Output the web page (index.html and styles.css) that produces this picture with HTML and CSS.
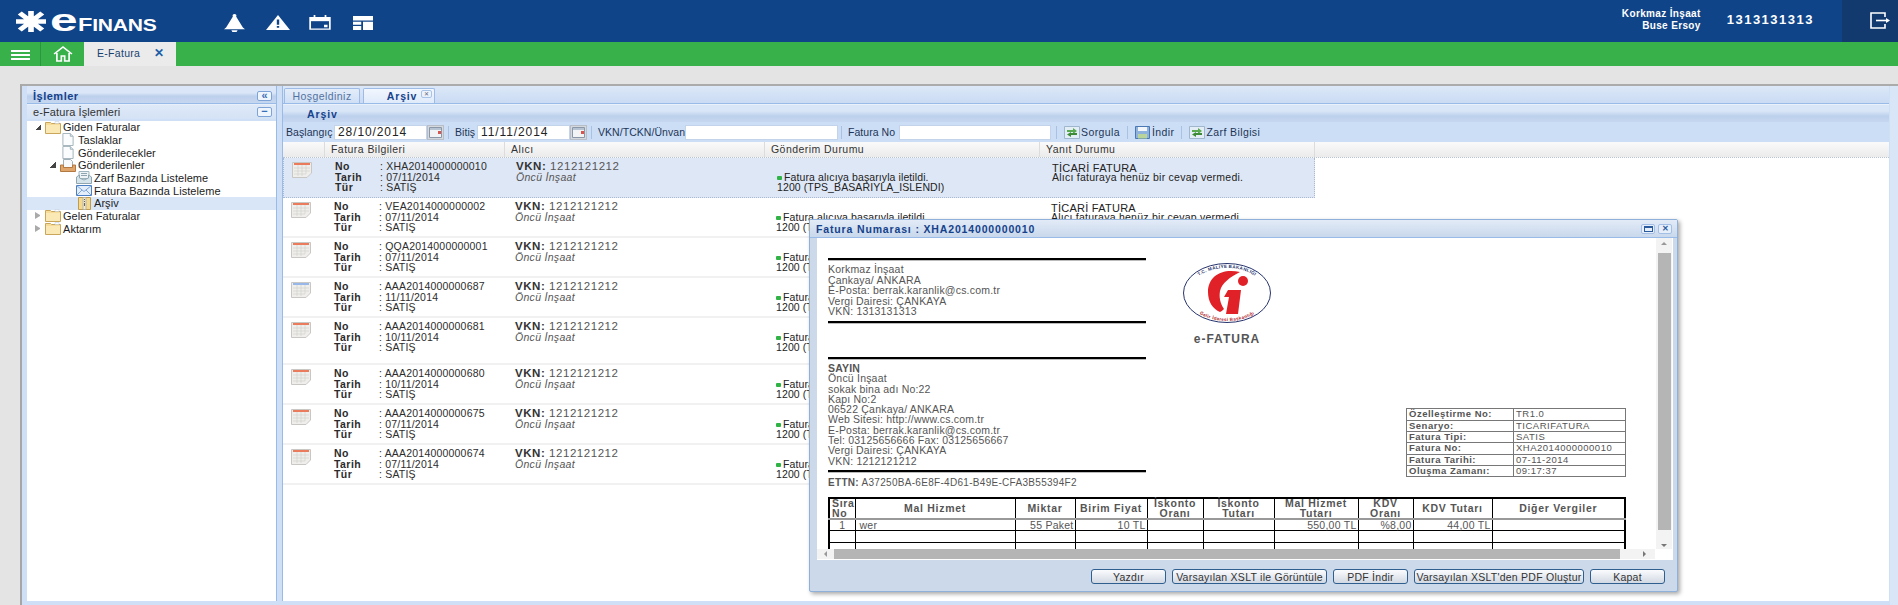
FILE: index.html
```html
<!DOCTYPE html>
<html lang="tr">
<head>
<meta charset="utf-8">
<title>eFinans E-Fatura</title>
<link rel="stylesheet" href="styles.css">
</head>
<body>
<svg class="defs" width="0" height="0" aria-hidden="true">
  <symbol id="i-folder" viewBox="0 0 16 13"><path d="M.5 3V1.500h5l1 1h9V12.500H.5z" fill="#f6dc96" stroke="#c9a65a"/><path d="M1 4h14v8H1z" fill="#fbe9b5"/><path d="M10 .5h4v2h-4z" fill="#fff" stroke="#b9c8d8" stroke-width=".5"/></symbol>
  <symbol id="i-doc" viewBox="0 0 12 14"><path d="M.5.500h8l3 3v10H.5z" fill="#fbfcfd" stroke="#9fb0b8"/><path d="M8.500.5v3h3" fill="#dfe8ee" stroke="#9fb0b8"/></symbol>
  <symbol id="i-tray" viewBox="0 0 16 13"><path d="M3.500.5h7l2 2v6h-9z" fill="#f7f9fb" stroke="#9fb0b8"/><path d="M.5 6h3v2.500h9V6h3v6.500H.5z" fill="#e0a56a" stroke="#b27a42"/></symbol>
  <symbol id="i-env-open" viewBox="0 0 16 13"><path d="M3 .5h10v7H3z" fill="#eef4f6" stroke="#9fb5bd"/><path d="M5 2.500h6M5 4.500h6" stroke="#8fa6b0"/><path d="M.5 6l3-2v3l4.500 2 4.500-2V4l3 2v6.500H.5z" fill="#d5e4ea" stroke="#8fa6b0"/></symbol>
  <symbol id="i-env" viewBox="0 0 16 13"><path d="M.5 1.500h15v10H.5z" fill="#e4eefb" stroke="#4a7fc4"/><path d="M.5 1.500L8 7.500l7.500-6M.5 11.500L6 6M15.500 11.500L10 6" fill="none" stroke="#7fa6d8"/></symbol>
  <symbol id="i-zip" viewBox="0 0 13 13"><path d="M.5.500h12v12H.5z" fill="#f5d98e" stroke="#c09c50"/><path d="M5 .5h3v12H5z" fill="#f4ecd2" stroke="#b5b5a5"/><path d="M6 2h1v1H6zM6 4h1v1H6zM6 6h1v3H6z" fill="#666"/></symbol>
  <symbol id="i-sheet" viewBox="0 0 20 16"><path d="M.5.500h19V11l-4.500 4.500H.5z" fill="#efeeec" stroke="#c9c7c3"/><path d="M2 2h16" stroke="#e8552c" stroke-width="1.500"/><path d="M6 3v11M10 3v11M14 3v9M2 6h16M2 9h16M2 12h12" stroke="#d3d1cc" stroke-width=".7"/></symbol>
  <symbol id="i-sheet-blue" viewBox="0 0 20 16"><path d="M.5.500h19V11l-4.500 4.500H.5z" fill="#efeeec" stroke="#c9c7c3"/><path d="M2 2h16" stroke="#7ba6e8" stroke-width="1.500"/><path d="M6 3v11M10 3v11M14 3v9M2 6h16M2 9h16M2 12h12" stroke="#d3d1cc" stroke-width=".7"/></symbol>
  <symbol id="i-cal" viewBox="0 0 13 11"><path d="M.5.500h12v10H.5z" fill="#f2f3f5" stroke="#8a97a8"/><path d="M1 1h11v2H1z" fill="#b5c3d3"/><path d="M9 4h3v3H9z" fill="#d9534f"/></symbol>
  <symbol id="i-refresh" viewBox="0 0 16 13"><path d="M.5.500h15v12H.5z" fill="#e3edf6" stroke="#9fb6cc"/><path d="M3 4h6V2l4 3-4 3V6H3z" fill="#58a94f"/><path d="M13 9H7v2L3 8.500 7 6v1h6z" fill="#3d8b37"/></symbol>
  <symbol id="i-save" viewBox="0 0 15 13"><path d="M.5.500h14v12H.5z" fill="#8fb2dc" stroke="#4a78b5"/><path d="M3 1h9v4H3z" fill="#f2f6fb"/><path d="M3 8h9v4.500H3z" fill="#b8d49a"/></symbol>
</svg>

<header class="topbar">
  <div class="logo">
    <svg class="logo-star" viewBox="0 0 24 22" preserveAspectRatio="none" aria-hidden="true"><path d="M12 0v22M0 11h24M3 2l18 18M21 2L3 20" stroke="#fff" stroke-width="4.500"/></svg>
    <span class="logo-e">e</span><span class="logo-word"><span class="logo-f">F</span>INANS</span>
  </div>
  <nav class="top-icons">
    <svg class="ti ti-bell" viewBox="0 0 20 20" preserveAspectRatio="none"><path d="M10 0a1.800 1.800 0 0 1 1.500 2.800L18 15l2 2H0l2-2L8.500 2.800A1.800 1.800 0 0 1 10 0z" fill="#fff"/><path d="M7 18h6l-1 2H8z" fill="#fff"/></svg>
    <svg class="ti ti-alert" viewBox="0 0 20 17" preserveAspectRatio="none"><path d="M10 0l10 17H0z" fill="#fff"/><path d="M9 5h2v6H9zM9 12.500h2v2H9z" fill="#0f4488"/></svg>
    <svg class="ti ti-cal" viewBox="0 0 19 17" preserveAspectRatio="none"><path d="M1 3h17v13H1z" fill="none" stroke="#fff" stroke-width="1.500"/><path d="M1 3h17v4H1z" fill="#fff"/><path d="M4 0h1.500v3H4zM13.500 0H15v3h-1.500zM13 11h3v3h-3z" fill="#fff"/></svg>
    <svg class="ti ti-lay" viewBox="0 0 17 16" preserveAspectRatio="none"><path d="M0 0h17v5H0zM0 6.500h7V10H0zM0 11.500h7V16H0zM8.500 6.500H17V16H8.500z" fill="#fff"/></svg>
  </nav>
  <div class="user">
    <div class="user-name">Korkmaz İnşaat<br>Buse Ersoy</div>
    <div class="user-vkn">1313131313</div>
  </div>
  <div class="logout">
    <svg viewBox="0 0 20 17" aria-hidden="true"><path d="M15 5V1H1v15h14v-4" fill="none" stroke="#fff" stroke-width="1.600"/><path d="M6 8.500h11" stroke="#fff" stroke-width="1.600"/><path d="M16 6l4 2.500-4 2.500z" fill="#fff"/></svg>
  </div>
</header>

<div class="greenbar">
  <div class="burger"><i></i><i></i><i></i></div>
  <div class="home">
    <svg viewBox="0 0 18 16" preserveAspectRatio="none" aria-hidden="true"><path d="M1 8l8-7 8 7M3.500 7v8h4v-5h3v5h4V7" fill="none" stroke="#fff" stroke-width="1.500"/></svg>
  </div>
  <div class="app-tab"><span>E-Fatura</span><b>✕</b></div>
</div>

<main class="workspace">
  <div class="frame">
    <aside class="left">
      <div class="panel-title"><span>İşlemler</span><span class="mini">«</span></div>
      <div class="panel-sub"><span>e-Fatura İşlemleri</span><span class="mini">−</span></div>
      <ul class="tree">
        <li class="node lv0"><i class="tw open"></i><svg class="ic16"><use href="#i-folder"/></svg><span>Giden Faturalar</span></li>
        <li class="node lv1"><svg class="ic12"><use href="#i-doc"/></svg><span>Taslaklar</span></li>
        <li class="node lv1"><svg class="ic12"><use href="#i-doc"/></svg><span>Gönderilecekler</span></li>
        <li class="node lv1b"><i class="tw open"></i><svg class="ic16"><use href="#i-tray"/></svg><span>Gönderilenler</span></li>
        <li class="node lv2"><svg class="ic16"><use href="#i-env-open"/></svg><span>Zarf Bazında Listeleme</span></li>
        <li class="node lv2"><svg class="ic16"><use href="#i-env"/></svg><span>Fatura Bazında Listeleme</span></li>
        <li class="node lv2 sel"><svg class="ic13"><use href="#i-zip"/></svg><span>Arşiv</span></li>
        <li class="node lv0"><i class="tw closed"></i><svg class="ic16"><use href="#i-folder"/></svg><span>Gelen Faturalar</span></li>
        <li class="node lv0"><i class="tw closed"></i><svg class="ic16"><use href="#i-folder"/></svg><span>Aktarım</span></li>
      </ul>
    </aside>

    <section class="right">
      <div class="tabs">
        <div class="tab">Hoşgeldiniz</div>
        <div class="tab active"><b>Arşiv</b><span class="tab-x">✕</span></div>
      </div>
      <div class="subtitle">Arşiv</div>
      <div class="toolbar">
        <label class="t-l1">Başlangıç</label>
        <span class="field f-date">28/10/2014</span><span class="cal"><svg><use href="#i-cal"/></svg></span>
        <i class="sep s1"></i>
        <label class="t-l2">Bitiş</label>
        <span class="field f-date">11/11/2014</span><span class="cal"><svg><use href="#i-cal"/></svg></span>
        <i class="sep s1"></i>
        <label class="t-l3">VKN/TCKN/Ünvan</label>
        <span class="field f-vkn"></span>
        <i class="sep s2"></i>
        <label class="t-l4">Fatura No</label>
        <span class="field f-no"></span>
        <i class="sep s3"></i>
        <span class="tbtn"><svg class="ic16"><use href="#i-refresh"/></svg>Sorgula</span>
        <i class="sep s4"></i>
        <span class="tbtn"><svg class="ic15"><use href="#i-save"/></svg>İndir</span>
        <i class="sep s4"></i>
        <span class="tbtn"><svg class="ic16"><use href="#i-refresh"/></svg>Zarf Bilgisi</span>
      </div>
      <div class="grid">
        <div class="ghead">
          <div class="gh"></div><div class="gh">Fatura Bilgileri</div><div class="gh">Alıcı</div><div class="gh">Gönderim Durumu</div><div class="gh">Yanıt Durumu</div><div class="gh gh-last"></div>
        </div>

        <div class="row selected">
          <div class="c-ic"><svg><use href="#i-sheet"/></svg></div>
          <div class="c-info"><b>No</b><span>: XHA2014000000010</span><b>Tarih</b><span>: 07/11/2014</span><b>Tür</b><span>: SATIŞ</span></div>
          <div class="c-buyer"><div class="vkn"><b>VKN:</b> 1212121212</div><em>Öncü İnşaat</em></div>
          <div class="c-send"><div><i class="dot"></i>Fatura alıcıya başarıyla iletildi.</div><div>1200 (TPS_BASARIYLA_ISLENDI)</div></div>
          <div class="c-reply"><div>TİCARİ FATURA</div><div>Alıcı faturaya henüz bir cevap vermedi.</div></div>
        </div>
        <div class="row">
          <div class="c-ic"><svg><use href="#i-sheet"/></svg></div>
          <div class="c-info"><b>No</b><span>: VEA2014000000002</span><b>Tarih</b><span>: 07/11/2014</span><b>Tür</b><span>: SATIŞ</span></div>
          <div class="c-buyer"><div class="vkn"><b>VKN:</b> 1212121212</div><em>Öncü İnşaat</em></div>
          <div class="c-send"><div><i class="dot"></i>Fatura alıcıya başarıyla iletildi.</div><div>1200 (TPS_BASARIYLA_ISLENDI)</div></div>
          <div class="c-reply"><div>TİCARİ FATURA</div><div>Alıcı faturaya henüz bir cevap vermedi.</div></div>
        </div>
        <div class="row">
          <div class="c-ic"><svg><use href="#i-sheet"/></svg></div>
          <div class="c-info"><b>No</b><span>: QQA2014000000001</span><b>Tarih</b><span>: 07/11/2014</span><b>Tür</b><span>: SATIŞ</span></div>
          <div class="c-buyer"><div class="vkn"><b>VKN:</b> 1212121212</div><em>Öncü İnşaat</em></div>
          <div class="c-send"><div><i class="dot"></i>Fatura alıcıya başarıyla iletildi.</div><div>1200 (TPS_BASARIYLA_ISLENDI)</div></div>
          <div class="c-reply"><div>TİCARİ FATURA</div><div>Alıcı faturaya henüz bir cevap vermedi.</div></div>
        </div>
        <div class="row">
          <div class="c-ic"><svg><use href="#i-sheet-blue"/></svg></div>
          <div class="c-info"><b>No</b><span>: AAA2014000000687</span><b>Tarih</b><span>: 11/11/2014</span><b>Tür</b><span>: SATIŞ</span></div>
          <div class="c-buyer"><div class="vkn"><b>VKN:</b> 1212121212</div><em>Öncü İnşaat</em></div>
          <div class="c-send"><div><i class="dot"></i>Fatura alıcıya başarıyla iletildi.</div><div>1200 (TPS_BASARIYLA_ISLENDI)</div></div>
          <div class="c-reply"><div>TİCARİ FATURA</div><div>Alıcı faturaya henüz bir cevap vermedi.</div></div>
        </div>
        <div class="row tall">
          <div class="c-ic"><svg><use href="#i-sheet"/></svg></div>
          <div class="c-info"><b>No</b><span>: AAA2014000000681</span><b>Tarih</b><span>: 10/11/2014</span><b>Tür</b><span>: SATIŞ</span></div>
          <div class="c-buyer"><div class="vkn"><b>VKN:</b> 1212121212</div><em>Öncü İnşaat</em></div>
          <div class="c-send"><div><i class="dot"></i>Fatura alıcıya başarıyla iletildi.</div><div>1200 (TPS_BASARIYLA_ISLENDI)</div></div>
          <div class="c-reply"><div>TİCARİ FATURA</div><div>Alıcı faturaya henüz bir cevap vermedi.</div></div>
        </div>
        <div class="row">
          <div class="c-ic"><svg><use href="#i-sheet"/></svg></div>
          <div class="c-info"><b>No</b><span>: AAA2014000000680</span><b>Tarih</b><span>: 10/11/2014</span><b>Tür</b><span>: SATIŞ</span></div>
          <div class="c-buyer"><div class="vkn"><b>VKN:</b> 1212121212</div><em>Öncü İnşaat</em></div>
          <div class="c-send"><div><i class="dot"></i>Fatura alıcıya başarıyla iletildi.</div><div>1200 (TPS_BASARIYLA_ISLENDI)</div></div>
          <div class="c-reply"><div>TİCARİ FATURA</div><div>Alıcı faturaya henüz bir cevap vermedi.</div></div>
        </div>
        <div class="row">
          <div class="c-ic"><svg><use href="#i-sheet"/></svg></div>
          <div class="c-info"><b>No</b><span>: AAA2014000000675</span><b>Tarih</b><span>: 07/11/2014</span><b>Tür</b><span>: SATIŞ</span></div>
          <div class="c-buyer"><div class="vkn"><b>VKN:</b> 1212121212</div><em>Öncü İnşaat</em></div>
          <div class="c-send"><div><i class="dot"></i>Fatura alıcıya başarıyla iletildi.</div><div>1200 (TPS_BASARIYLA_ISLENDI)</div></div>
          <div class="c-reply"><div>TİCARİ FATURA</div><div>Alıcı faturaya henüz bir cevap vermedi.</div></div>
        </div>
        <div class="row">
          <div class="c-ic"><svg><use href="#i-sheet"/></svg></div>
          <div class="c-info"><b>No</b><span>: AAA2014000000674</span><b>Tarih</b><span>: 07/11/2014</span><b>Tür</b><span>: SATIŞ</span></div>
          <div class="c-buyer"><div class="vkn"><b>VKN:</b> 1212121212</div><em>Öncü İnşaat</em></div>
          <div class="c-send"><div><i class="dot"></i>Fatura alıcıya başarıyla iletildi.</div><div>1200 (TPS_BASARIYLA_ISLENDI)</div></div>
          <div class="c-reply"><div>TİCARİ FATURA</div><div>Alıcı faturaya henüz bir cevap vermedi.</div></div>
        </div>
      </div>
    </section>
  </div>
  <div class="frame-end"></div>
</main>

<div class="dialog">
  <div class="dlg-title">
    <span>Fatura Numarası : XHA2014000000010</span>
    <span class="dlg-btn"><i class="max"></i></span><span class="dlg-btn">✕</span>
  </div>
  <div class="dlg-body">
    <div class="dlg-view">
      <div class="invoice">
        <div class="inv-top">
          <div class="inv-left">
            <hr class="rule">
            <div class="party first">Korkmaz İnşaat<br>Çankaya/ ANKARA<br>E-Posta: berrak.karanlik@cs.com.tr<br>Vergi Dairesi: ÇANKAYA<br>VKN: 1313131313</div>
            <hr class="rule">
            <hr class="rule gap">
            <div class="party second"><b>SAYIN</b><br>Öncü İnşaat<br>sokak bina adı No:22<br>Kapı No:2<br>06522 Çankaya/ ANKARA<br>Web Sitesi: http://www.cs.com.tr<br>E-Posta: berrak.karanlik@cs.com.tr<br>Tel: 03125656666 Fax: 03125656667<br>Vergi Dairesi: ÇANKAYA<br>VKN: 1212121212</div>
            <hr class="rule">
            <div class="ettn"><b>ETTN:</b> A37250BA-6E8F-4D61-B49E-CFA3B55394F2</div>
          </div>
          <div class="inv-right">
            <div class="gib">
              <svg viewBox="0 0 90 62" aria-hidden="true">
                <ellipse cx="45" cy="31" rx="43.500" ry="29.500" fill="#fff" stroke="#27346e" stroke-width="1"/>
                <defs>
                  <path id="arc-top" d="M7 30A38 24 0 0 1 83 30"/>
                  <path id="arc-bot" d="M5 33A40 26 0 0 0 85 33"/>
                </defs>
                <text class="gib-t"><textPath href="#arc-top" startOffset="50%" text-anchor="middle">T.C. MALİYE BAKANLIĞI</textPath></text>
                <text class="gib-b"><textPath href="#arc-bot" startOffset="50%" text-anchor="middle">Gelir İdaresi Başkanlığı</textPath></text>
                <path d="M58 10C40 6 26 14 26 30c0 10 5 17 12 20 2-1 3-2 4-3-4-6-5-12-4-18 2-8 10-14 20-19z" fill="#e02127"/>
                <path d="M46 28h13l-3 24H44l3-17h-5z" fill="#e02127"/>
                <circle cx="61" cy="19" r="5" fill="#e02127"/>
              </svg>
              <div class="gib-name">e-FATURA</div>
            </div>
            <table class="summary">
              <tr><th>Özelleştirme No:</th><td>TR1.0</td></tr>
              <tr><th>Senaryo:</th><td>TICARIFATURA</td></tr>
              <tr><th>Fatura Tipi:</th><td>SATIS</td></tr>
              <tr><th>Fatura No:</th><td>XHA2014000000010</td></tr>
              <tr><th>Fatura Tarihi:</th><td>07-11-2014</td></tr>
              <tr><th>Oluşma Zamanı:</th><td>09:17:37</td></tr>
            </table>
          </div>
        </div>
        <table class="lines">
          <colgroup><col><col><col><col><col><col><col><col><col><col></colgroup>
          <tr><th class="tl">Sıra No</th><th>Mal Hizmet</th><th>Miktar</th><th>Birim Fiyat</th><th>İskonto Oranı</th><th>İskonto Tutarı</th><th>Mal Hizmet Tutarı</th><th>KDV Oranı</th><th>KDV Tutarı</th><th>Diğer Vergiler</th></tr>
          <tr><td class="tc">1</td><td class="tp">wer</td><td class="tr">55 Paket</td><td class="tr">10 TL</td><td></td><td></td><td class="tr">550,00 TL</td><td class="tr">%8,00</td><td class="tr">44,00 TL</td><td></td></tr>
          <tr><td></td><td></td><td></td><td></td><td></td><td></td><td></td><td></td><td></td><td></td></tr>
          <tr><td></td><td></td><td></td><td></td><td></td><td></td><td></td><td></td><td></td><td></td></tr>
        </table>
      </div>
      <div class="vbar"><i class="arr-up"></i><i class="v-thumb"></i><i class="arr-down"></i></div>
      <div class="hbar"><i class="arr-left"></i><i class="h-thumb"></i><i class="arr-right"></i></div>
    </div>
  </div>
  <div class="dlg-foot">
    <button class="btn b-s">Yazdır</button>
    <button class="btn b-m">Varsayılan XSLT ile Görüntüle</button>
    <button class="btn b-s">PDF İndir</button>
    <button class="btn b-l">Varsayılan XSLT'den PDF Oluştur</button>
    <button class="btn b-s">Kapat</button>
  </div>
</div>
</body>
</html>
```

FILE: styles.css
```css
* { box-sizing: border-box; }
html, body { margin: 0; padding: 0; height: 605px; overflow: hidden; }
body { font-family: "Liberation Sans", Arial, sans-serif; font-size: 11px; color: #222; background: #e4e4e4; position: relative; letter-spacing: .45px; }
.defs { position: absolute; }
ul { list-style: none; margin: 0; padding: 0; }

/* top bar */
.topbar { height: 42px; background: #0f4488; display: flex; align-items: stretch; color: #fff; }
.logo { width: 224px; flex: none; padding-left: 16px; display: flex; align-items: baseline; font-weight: bold; white-space: nowrap; letter-spacing: 0; }
.logo-star { width: 30px; height: 21px; align-self: flex-start; margin: 11px 4px 0 0; flex: none; }
.logo-e { display: block; width: 28px; font-size: 31px; line-height: 41px; transform: scaleX(1.6); transform-origin: left center; flex: none; }
.logo-word { display: block; font-size: 17px; transform: scaleX(1.24); transform-origin: left center; flex: none; letter-spacing: -.2px; }
.logo-f { font-size: 19px; }
.top-icons { display: flex; align-items: center; width: 1000px; flex: none; padding-top: 3px; }
.ti { display: block; flex: none; }
.ti-bell { width: 21px; height: 18px; }
.ti-alert { width: 24px; height: 15px; margin-left: 21px; }
.ti-cal { width: 22px; height: 15px; margin-left: 19px; }
.ti-lay { width: 20px; height: 14px; margin-left: 22px; }
.user { flex: 1; display: flex; align-items: center; justify-content: flex-end; padding-right: 28px; padding-bottom: 3px; }
.user-name { text-align: right; font-weight: bold; font-size: 10px; line-height: 11.500px; margin-right: 26px; letter-spacing: .35px; }
.user-vkn { font-weight: bold; font-size: 13px; letter-spacing: 1.500px; }
.logout { width: 56px; flex: none; background: #123a6f; display: flex; align-items: center; justify-content: flex-end; padding-right: 8px; padding-bottom: 2px; }
.logout svg { width: 20px; height: 17px; }

/* green bar */
.greenbar { height: 24px; background: #39b14b; display: flex; align-items: stretch; }
.burger { width: 41px; padding: 8px 10px 0 11px; border-right: 1px solid #2b963c; }
.burger i { display: block; height: 2px; background: #fff; margin-bottom: 2px; }
.home { width: 43px; display: flex; align-items: center; justify-content: center; padding-bottom: 1px; }
.home svg { width: 20px; height: 16px; }
.app-tab { width: 92px; background: #ebebeb; color: #17426f; display: flex; align-items: center; justify-content: space-between; padding: 0 12px 3px 13px; font-size: 10.500px; white-space: nowrap; letter-spacing: .3px; }
.app-tab b { font-size: 12px; color: #1a5ea8; }

/* workspace */
.workspace { height: 539px; display: flex; padding: 18px 0 0 20px; }
.frame { flex: none; width: 1870px; height: 521px; display: flex; border-top: 2px solid #ababab; border-left: 2px solid #a6a6a6; background: #cfe0f6; padding-left: 5px; }
.frame-end { flex: 1; height: 521px; background: #d9e6f7; border-top: 2px solid #ababab; }

/* left panel */
.left { width: 250px; height: 515px; background: #fff; flex: none; border-right: 1px solid #99bbe8; }
.panel-title { height: 18px; display: flex; align-items: center; justify-content: space-between; padding: 2px 4px 0 6px; font-weight: bold; color: #15428b; background: linear-gradient(#dbe7f8 0 40%, #bccfec 60%, #c6d7f0); border-bottom: 1px solid #99bbe8; font-size: 11px; letter-spacing: .5px; }
.panel-sub { height: 17px; display: flex; align-items: center; justify-content: space-between; padding: 0 4px 0 6px; color: #333; background: linear-gradient(#dfe9f8, #d4e2f5); border-top: 1px solid #e8f0fb; border-bottom: 2px solid #cfe0f6; letter-spacing: .1px; }
.mini { width: 15px; height: 10px; border: 1px solid #7ea3d6; border-radius: 2px; background: #eff5fd; color: #3a6fb7; font-size: 11px; line-height: 6px; text-align: center; letter-spacing: 0; font-weight: bold; }
.tree { color: #1c1c1c; letter-spacing: .05px; }
.node { height: 12.670px; display: flex; align-items: center; white-space: nowrap; position: relative; }
.node svg { flex: none; overflow: visible; }
.lv0 { padding-left: 8px; }
.lv1 { padding-left: 35px; }
.lv1b { padding-left: 23px; }
.lv2 { padding-left: 49px; }
.sel { background: #d9e6f7; }
.tw { display: block; width: 6px; height: 6px; margin-right: 4px; flex: none; }
.tw.open { background: linear-gradient(135deg, transparent 50%, #444 50%); }
.tw.closed { border-left: 5px solid #aaa; border-top: 3px solid transparent; border-bottom: 3px solid transparent; height: 7px; width: 5px; margin-right: 5px; }
.ic16 { width: 16px; height: 13px; margin-right: 2px; }
.ic15 { width: 15px; height: 13px; margin-right: 2px; }
.ic12 { width: 12px; height: 13px; margin-right: 4px; }
.ic13 { width: 13px; height: 13px; margin: 0 3px 0 2px; }

/* right panel */
.right { flex: none; width: 1607px; margin-left: 5px; height: 515px; background: #fff; border-left: 1px solid #99bbe8; display: flex; flex-direction: column; }
.tabs { height: 18px; display: flex; align-items: flex-end; gap: 3px; padding-left: 1px; background: linear-gradient(#dce8f8, #cadbf3); border-bottom: 1px solid #99bbe8; flex: none; }
.tab { width: 76px; height: 15px; text-align: center; line-height: 14px; color: #53729f; background: linear-gradient(#e4edf9, #cfdff5); border: 1px solid #9dbbe5; border-bottom: 0; border-radius: 2px 2px 0 0; font-size: 10.500px; }
.tab.active { width: 72px; background: linear-gradient(#f2f7fe, #dfeafa); color: #15428b; position: relative; padding-right: 2px; padding-left: 8px; letter-spacing: .8px; }
.tab-x { position: absolute; right: 2px; top: 1px; width: 11px; height: 8px; border: 1px solid #a9c3e6; border-radius: 2px; font-size: 6px; line-height: 6px; letter-spacing: 0; color: #667; }
.subtitle { height: 18px; flex: none; padding-left: 24px; line-height: 18px; font-weight: bold; color: #15428b; background: linear-gradient(#d9e6f7 0 35%, #bdd0ec 65%, #c6d7f0); border-top: 1px solid #eaf1fb; font-size: 10.500px; letter-spacing: .9px; }
.toolbar { height: 20px; flex: none; display: flex; align-items: center; padding-left: 3px; background: #ccdef5; font-size: 10.500px; color: #1d3557; white-space: nowrap; letter-spacing: .05px; }
.field { height: 15px; background: #fff; border: 1px solid #c3d4ea; font-size: 12px; line-height: 13px; padding-left: 3px; letter-spacing: .9px; color: #222; flex: none; }
.t-l1 { width: 48px; flex: none; }
.f-date { width: 93px; }
.cal { width: 17px; height: 15px; background: #d5d9de; border: 1px solid #b7bec8; display: flex; align-items: center; justify-content: center; flex: none; }
.cal svg { width: 13px; height: 11px; }
.sep { width: 1px; height: 13px; background: #a9c1e2; flex: none; }
.s1 { margin: 0 6px 0 4px; }
.s2 { margin: 0 6px 0 3px; }
.s3 { margin: 0 7px 0 5px; }
.s4 { margin: 0 7px; }
.t-l2 { width: 22px; flex: none; }
.t-l3 { width: 87px; flex: none; }
.f-vkn { width: 153px; }
.t-l4 { width: 51px; flex: none; }
.f-no { width: 152px; }
.tbtn { display: flex; align-items: center; letter-spacing: .4px; }
.tbtn .ic16 { margin-right: 1px; }

/* grid */
.grid { flex: 1; background: #fff; overflow: hidden; }
.ghead { display: grid; grid-template-columns: 42px 180px 260px 275px 275px 1fr; height: 16px; background: linear-gradient(#fafafa, #ebebeb); border-bottom: 1px dotted #b9c4d3; font-size: 10.500px; color: #333; }
.gh { padding-left: 6px; line-height: 15px; border-right: 1px solid #dcdcdc; }
.gh-last { border-right: 0; }
.row { display: grid; grid-template-columns: 42px 180px 260px 275px 275px; width: 1032px; height: 40px; border-bottom: 2px solid #f1f1f1; position: relative; }
.row.tall { height: 47px; }
.row.selected { background: #dee7f5; border-bottom: 1px dotted #a9b9d1; border-left: 1px dotted #a9b9d1; border-right: 1px dotted #a9b9d1; }
.c-ic { padding: 4px 0 0 8px; }
.c-ic svg { width: 20px; height: 16px; display: block; }
.c-info { display: grid; grid-template-columns: 45px 1fr; grid-auto-rows: 10.500px; padding: 3px 0 0 9px; line-height: 10.500px; align-content: start; font-size: 10.500px; color: #2c2c2c; white-space: nowrap; }
.c-info span { letter-spacing: .2px; }
.c-buyer { padding: 2px 0 0 10px; color: #555; }
.vkn { font-size: 11.500px; line-height: 12px; letter-spacing: .55px; }
.vkn b { color: #333; }
.c-buyer em { display: block; line-height: 11px; font-size: 10.500px; letter-spacing: .3px; }
.c-send { padding: 15px 0 0 11px; line-height: 9.500px; font-size: 10.500px; white-space: nowrap; letter-spacing: .1px; }
.dot { display: inline-block; width: 5px; height: 4px; background: #2fb344; margin: 0 2px 1px 0; vertical-align: middle; border-radius: 1px; }
.c-reply { padding: 5px 0 0 11px; line-height: 9.500px; font-size: 10.500px; white-space: nowrap; letter-spacing: .25px; }
.c-reply div:first-child { font-size: 11px; line-height: 10px; }

/* dialog */
.dialog { position: absolute; left: 809px; top: 219px; width: 869px; height: 373px; background: #cbd9ea; border: 1px solid #8fb0d9; border-radius: 2px; box-shadow: 2px 2px 4px rgba(0,0,0,.35); display: flex; flex-direction: column; }
.dlg-title { height: 18px; flex: none; display: flex; align-items: center; padding: 0 5px 0 6px; font-weight: bold; color: #15428b; font-size: 10.500px; letter-spacing: .85px; background: linear-gradient(#e2ebf7, #c9d8ec); border-bottom: 1px solid #99bbe8; }
.dlg-title span:first-child { flex: 1; }
.dlg-btn { width: 14px; height: 10px; margin-left: 3px; border: 1px solid #a3bfe5; border-radius: 2px; background: #e6eefa; font-size: 8px; line-height: 8px; text-align: center; color: #2a5a9e; letter-spacing: 0; display: flex; align-items: center; justify-content: center; }
.max { display: block; width: 9px; height: 6px; border: 1px solid #2a5a9e; border-top-width: 2px; }
.dlg-body { height: 322px; flex: none; padding: 0 5px 0 7px; }
.dlg-view { position: relative; width: 856px; height: 322px; background: #fff; overflow: hidden; }
.invoice { height: 311px; width: 838px; overflow: hidden; padding: 20px 29px 0 11px; color: #555; font-size: 10.500px; }
.inv-top { display: flex; }
.inv-left { width: 318px; flex: none; }
.rule { margin: 0; height: 2px; border: 0; background: #000; box-shadow: 0 1px 0 #bbb; }
.rule.gap { margin-top: 34px; }
.party { line-height: 10.500px; letter-spacing: .2px; white-space: nowrap; }
.party.first { padding: 4px 0 4.500px; }
.party.second { padding: 4px 0 4.500px; line-height: 10.280px; }
.ettn { padding-top: 5px; line-height: 11px; white-space: nowrap; font-size: 10px; letter-spacing: .3px; }
.inv-right { flex: 1; display: flex; flex-direction: column; justify-content: space-between; padding-bottom: 11px; }
.gib { width: 162px; text-align: center; padding-top: 4px; }
.gib svg { width: 90px; height: 62px; display: block; margin: 0 auto; }
.gib-t { font-size: 4.500px; font-weight: bold; fill: #27346e; letter-spacing: .3px; }
.gib-b { font-size: 4.500px; font-weight: bold; fill: #b0252a; letter-spacing: .3px; }
.gib-name { margin-top: 9px; font-weight: bold; font-size: 12px; letter-spacing: 1px; color: #555; line-height: 12px; }
.summary { align-self: flex-end; width: 220px; height: 69px; border-collapse: collapse; border: 1px solid #444; table-layout: fixed; font-size: 9.500px; }
.summary th, .summary td { border: 1px solid #777; padding: 0 2px; line-height: 10px; text-align: left; white-space: nowrap; letter-spacing: .5px; }
.summary th { width: 107px; font-weight: bold; }
.lines { margin-top: 9px; width: 798px; table-layout: fixed; border-collapse: collapse; border-top: 2px solid #000; border-left: 2px solid #000; border-right: 2px solid #000; font-size: 10.500px; letter-spacing: .25px; }
.lines col:nth-child(1) { width: 26px; }
.lines col:nth-child(2) { width: 160px; }
.lines col:nth-child(3) { width: 60px; }
.lines col:nth-child(4) { width: 72px; }
.lines col:nth-child(5) { width: 56px; }
.lines col:nth-child(6) { width: 71px; }
.lines col:nth-child(7) { width: 84px; }
.lines col:nth-child(8) { width: 55px; }
.lines col:nth-child(9) { width: 79px; }
.lines th { height: 20px; padding: 0 2px; font-size: 10.500px; letter-spacing: .7px; line-height: 9.500px; font-weight: bold; text-align: center; border-left: 1px solid #000; border-right: 1px solid #000; border-bottom: 2px solid #999; color: #555; }
.lines th.tl { text-align: left; }
.lines td { height: 11.500px; padding: 0 1px; line-height: 10px; border: 1px solid #000; white-space: nowrap; }
.lines .tc { text-align: center; }
.lines .tp { padding-left: 4px; }
.lines .tr { text-align: right; }
.vbar { position: absolute; right: 1px; top: 0; width: 16px; height: 311px; background: #f3f3f3; display: flex; flex-direction: column; align-items: center; padding-top: 4px; }
.arr-up { display: block; border: 3px solid transparent; border-bottom-color: #999; border-top: 0; margin-bottom: 8px; }
.v-thumb { display: block; width: 13px; height: 277px; background: #b5b5b5; }
.arr-down { display: block; border: 3px solid transparent; border-top-color: #777; border-bottom: 0; margin-top: 14px; }
.hbar { position: absolute; left: 0; top: 311px; width: 838px; height: 10px; background: #f3f3f3; display: flex; align-items: center; padding-left: 7px; }
.arr-left { display: block; border: 3px solid transparent; border-right-color: #999; border-left: 0; margin-right: 7px; }
.h-thumb { display: block; width: 786px; height: 10px; background: #b5b5b5; }
.arr-right { display: block; border: 3px solid transparent; border-left-color: #777; border-right: 0; margin-left: 23px; }
.dlg-foot { flex: 1; display: flex; justify-content: flex-end; gap: 6px; padding: 9px 12px 0 0; }
.btn { height: 15px; padding: 0; font: inherit; font-size: 10.500px; letter-spacing: .25px; color: #333; border: 1px solid #2e5f8f; border-radius: 3px; background: linear-gradient(#fafbfd, #d2d9e3); line-height: 12px; white-space: nowrap; }
.b-s { width: 75px; }
.b-m { width: 155px; }
.b-l { width: 170px; }
```
